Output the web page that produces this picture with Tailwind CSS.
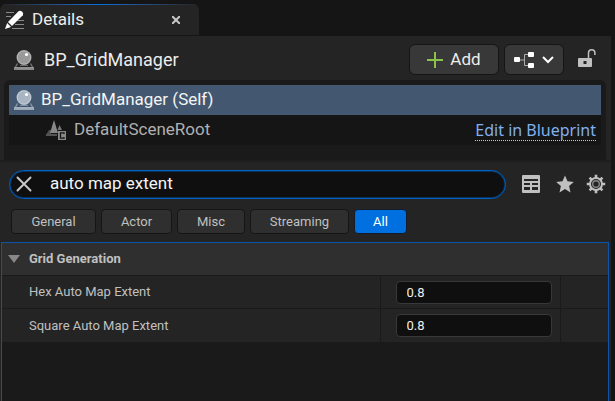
<!DOCTYPE html>
<html lang="en">
<head>
<meta charset="utf-8">
<meta name="viewport" content="width=device-width, initial-scale=1">
<title>Details</title>
<script src="https://cdn.jsdelivr.net/npm/@tailwindcss/browser@4"></script>
</head>
<body class="bg-[#151515] font-[Roboto,sans-serif] text-[#c0c0c0]">
<svg class="hidden" aria-hidden="true">
  <symbol id="actor" viewBox="0 0 20 20">
    <path d="M3.500 13.500 1 18h18l-2.500-4.500" fill="none" stroke="currentColor" stroke-opacity=".7" stroke-width="1.300"/>
    <path d="M6 15.500h8" stroke="currentColor" stroke-opacity=".6"/>
    <rect y="17" width="20" height="3" fill="currentColor" opacity=".85"/>
    <circle cx="10" cy="7.500" r="7.500" fill="currentColor"/>
    <circle cx="10" cy="7.500" r="6.600" fill="none" stroke="#fff" stroke-opacity=".3"/>
    <circle cx="12.500" cy="4.500" r="1.600" fill="#fff"/>
  </symbol>
</svg>
<div class="flex h-screen flex-col overflow-hidden pr-1">
  <header class="flex h-9 shrink-0 pt-1">
    <div class="relative flex h-[31px] w-[199px] items-center overflow-hidden rounded-t-md bg-[#242424] pr-[15px] pl-[5px]">
      <span class="absolute inset-x-0 top-0 h-px bg-linear-to-r from-[#242424] via-[#0070e0] to-[#242424]"></span>
      <svg class="size-5" viewBox="0 0 20 20" aria-hidden="true">
        <path d="M1 2.500h8M1 6.500h5M11 10.500h8M10 14.500h9M7 18.500h12" stroke="#8a8a8a"/>
        <path d="M3 12 13.500 1.200Q15 0 17 1.500t.8 3.800L7 16z" fill="#fff"/>
        <path d="m2.200 13 3.800 4-6 2z" fill="#fff"/>
      </svg>
      <h1 class="ml-[7px] text-[17px] text-[#ececec]">Details</h1>
      <button class="ml-auto flex size-4 items-center justify-center" aria-label="Close tab">
        <svg class="size-2" viewBox="0 0 8 8"><path d="m0 0 8 8M8 0 0 8" stroke="#c8c8c8" stroke-width="2"/></svg>
      </button>
    </div>
  </header>
  <main class="flex min-h-0 grow flex-col bg-[#242424]">
    <div class="flex h-11 shrink-0 items-center pt-[3px] pr-[15px] pl-[14px]">
      <svg class="size-5 text-[#999]" aria-hidden="true"><use href="#actor"/></svg>
      <h2 class="ml-[10px] text-lg text-[#ececec]">BP_GridManager</h2>
      <button class="ml-auto flex h-[31px] w-[90px] items-center justify-center gap-[7px] rounded-md border border-[#151515] bg-[#383838] text-[17px] text-[#ececec]">
        <svg class="size-4" viewBox="0 0 16 16" aria-hidden="true"><path d="M8 0v16M0 8h16" stroke="#8bc24a" stroke-width="2"/></svg>Add
      </button>
      <button class="ml-[5px] flex h-[31px] w-[60px] items-center justify-center gap-2 rounded-md border border-[#151515] bg-[#383838]" aria-label="Blueprint options">
        <svg class="h-4 w-5" viewBox="0 0 20 16" fill="#fff" aria-hidden="true"><path d="M5 8h5M14 2.500h-3.500v11H14" fill="none" stroke="#aaa"/><rect y="5" width="6" height="5" rx="1"/><rect x="14" width="6" height="5" rx="1"/><rect x="14" y="11" width="6" height="5" rx="1"/></svg>
        <svg class="h-3 w-3" viewBox="0 0 12 12" aria-hidden="true"><path d="m1 3 5 5 5-5" fill="none" stroke="#fff" stroke-width="2"/></svg>
      </button>
      <button class="ml-[14px] flex pb-1" aria-label="Unlock">
        <svg class="h-5 w-[18px]" viewBox="0 0 18 20" aria-hidden="true"><path d="M10.500 10V5a3.200 3.200 0 0 1 6.400 0v2" fill="none" stroke="#c0c0c0" stroke-width="1.500"/><rect y="10" width="14" height="9" rx="1" fill="#c0c0c0"/><path d="M5.500 13h3v3h-3z" fill="#242424"/></svg>
      </button>
    </div>

    <ul class="mr-[5px] ml-1 h-20 shrink-0 rounded-t-md bg-[#1a1a1a] p-[5px]">
      <li class="flex h-[30px] items-center bg-[#435870] pl-[5px] text-[17px] text-[#f4f4f4]">
        <svg class="size-5 text-[#a9b5c2]" aria-hidden="true"><use href="#actor"/></svg>
        <span class="ml-[7px]">BP_GridManager (Self)</span>
      </li>
      <li class="flex h-[30px] items-center bg-[#151515] pr-[5px] pl-[37px] text-[17px] text-[#b0b0b0]">
        <svg class="size-5" viewBox="0 0 20 20" aria-hidden="true"><path d="M0 15 3 10h2v5z" fill="#505050"/><path d="m8 0 4 13H4z" fill="#888"/><path d="m13.500 5 2.500 5h-4.500z" fill="#777"/><path d="M0 14h11v2H0z" fill="#555"/><path d="M12 11h8v9h-8z" fill="#888"/><path d="M18 14v-1.200h-3.500v5.400H18V17" fill="none" stroke="#151515" stroke-width="1.300"/></svg>
        <span class="ml-2">DefaultSceneRoot</span>
        <a href="#" class="ml-auto border-b border-dotted border-[#a6cdff] font-['Noto_Sans',sans-serif] text-base leading-5 text-[#80b0f0]">Edit in Blueprint</a>
      </li>
    </ul>

    <div class="flex shrink-0 items-center border-t-2 border-[#1e1e1e] pt-2 pr-[5px] pl-[9px]">
      <div class="flex h-[29px] grow items-center rounded-full border border-[#0062c4] bg-[#0f0f0f] pb-px pl-[6px] ring-1 ring-[#0062c4]/40 ring-inset">
        <button class="flex size-4 shrink-0 items-center justify-center" aria-label="Clear search">
          <svg class="size-4" viewBox="0 0 16 16"><path d="m1.500 1.500 13 13M14.500 1.500l-13 13" stroke="#c8c8c8" stroke-width="2" stroke-linecap="round"/></svg>
        </button>
        <input type="text" aria-label="Search details" value="auto map extent" class="ml-[18px] min-w-0 grow bg-transparent text-[17px] text-[#f4f4f4] outline-none">
      </div>
      <div class="ml-4 flex items-center pb-[2px]">
        <button class="flex" aria-label="Property matrix">
          <svg class="h-[18px] w-[18px]" viewBox="0 0 18 18" aria-hidden="true"><rect width="18" height="18" rx="1" fill="#c0c0c0"/><path d="M2 4h14v2H2zM2 8h6v2H2zM10 8h6v2h-6zM2 12h6v3H2zM10 12h6v3h-6z" fill="#242424"/></svg>
        </button>
        <button class="ml-4 flex" aria-label="Favorites">
          <svg class="h-[18px] w-[18px]" viewBox="0 0 18 18" aria-hidden="true"><path d="m9 .5 2.500 5.800 6.300.6-4.700 4.200 1.400 6.300L9 14.100l-5.500 3.300 1.400-6.300L.2 6.900l6.300-.6z" fill="#c0c0c0"/></svg>
        </button>
        <button class="ml-3 flex" aria-label="Settings">
          <svg class="size-5" viewBox="0 0 20 20" fill="none" stroke="#c0c0c0" aria-hidden="true"><circle cx="10" cy="10" r="6" stroke-width="2"/><circle cx="10" cy="10" r="3.300" stroke="#888" stroke-width="1.400"/><path d="M10 .8v3.400M10 15.800v3.400M.8 10h3.400M15.800 10h3.400M3.600 3.600l2.200 2.200M14.200 14.200l2.200 2.200M3.600 16.400l2.200-2.200M14.200 5.800l2.200-2.200" stroke-width="2.600"/></svg>
        </button>
      </div>
    </div>

    <nav class="flex shrink-0 gap-[5px] px-[11px] pt-[10px] pb-2 text-[13px]" aria-label="Sections">
      <button class="h-[25px] w-[85px] rounded border border-[#151515] bg-[#2f2f2f]">General</button>
      <button class="h-[25px] w-[71px] rounded border border-[#151515] bg-[#2f2f2f]">Actor</button>
      <button class="h-[25px] w-[68px] rounded border border-[#151515] bg-[#2f2f2f]">Misc</button>
      <button class="h-[25px] w-[99px] rounded border border-[#151515] bg-[#2f2f2f]">Streaming</button>
      <button class="h-[25px] w-[53px] rounded border border-[#151c26] bg-[#0070e0] text-white">All</button>
    </nav>

    <section class="mr-[2px] ml-px grow border border-b-0 border-[#0a55a5] bg-[#1a1a1a]">
      <h3 class="flex h-8 items-center bg-[#2f2f2f] pl-[6px] text-[13px] font-bold">
        <svg class="h-2 w-3" viewBox="0 0 12 8" aria-hidden="true"><path d="M0 0h12L6 8z" fill="#888"/></svg>
        <span class="ml-[9px]">Grid Generation</span>
      </h3>
      <table class="w-full table-fixed border-collapse text-[13px]">
        <colgroup><col><col class="w-[180px]"><col class="w-12"></colgroup>
        <tbody class="bg-[#242424]">
          <tr class="h-[33px] border-t border-[#1a1a1a]">
            <th scope="row" class="pl-[27px] text-left font-normal"><label for="hex">Hex Auto Map Extent</label></th>
            <td class="border-x border-[#1a1a1a] pr-2 pl-[15px]"><input id="hex" type="text" value="0.8" class="block h-[23px] w-full rounded border border-[#383838] bg-[#0f0f0f] px-[10px] text-[#f0f0f0]"></td>
            <td></td>
          </tr>
          <tr class="h-[33px] border-t border-[#1a1a1a]">
            <th scope="row" class="pl-[27px] text-left font-normal"><label for="square">Square Auto Map Extent</label></th>
            <td class="border-x border-[#1a1a1a] pr-2 pl-[15px]"><input id="square" type="text" value="0.8" class="block h-[23px] w-full rounded border border-[#383838] bg-[#0f0f0f] px-[10px] text-[#f0f0f0]"></td>
            <td></td>
          </tr>
        </tbody>
      </table>
    </section>
  </main>
</div>
</body>
</html>
